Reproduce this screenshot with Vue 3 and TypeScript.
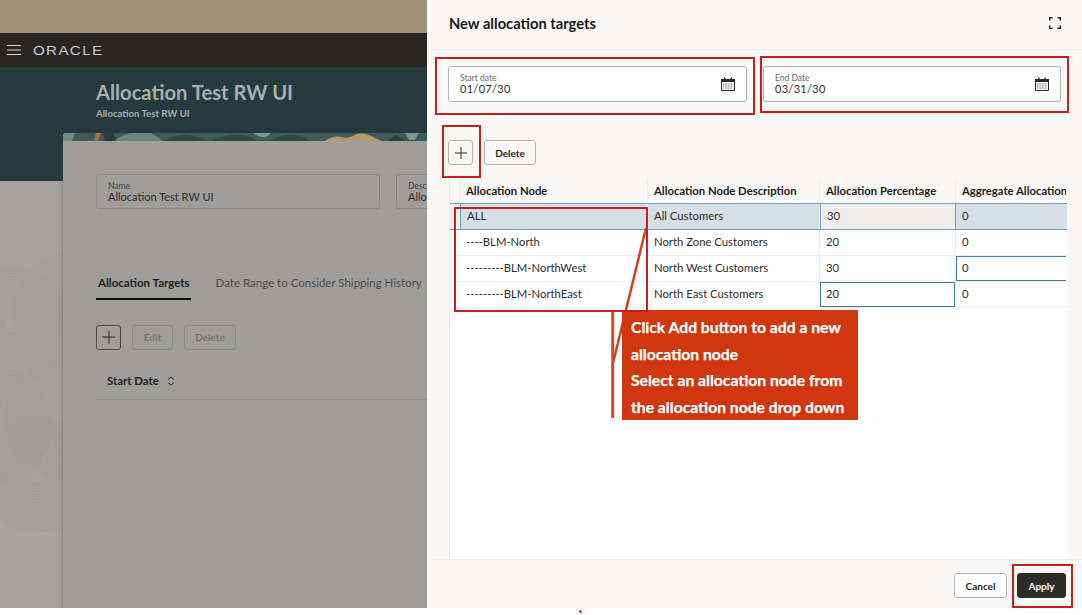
<script setup lang="ts">
interface Row { node: string; desc: string; pct: string; agg: string; cls: string }
const rows: Row[] = [
  { node: 'ALL', desc: 'All Customers', pct: '30', agg: '0', cls: 'sel' },
  { node: '----BLM-North', desc: 'North Zone Customers', pct: '20', agg: '0', cls: '' },
  { node: '---------BLM-NorthWest', desc: 'North West Customers', pct: '30', agg: '0', cls: 'agg-focus' },
  { node: '---------BLM-NorthEast', desc: 'North East Customers', pct: '20', agg: '0', cls: 'pct-focus' },
]
const arcs: number[] = Array.from({ length: 20 }, (_, i) => 8 + i * 2.6)
const clusters = [
  { x: 12, y: 75 }, { x: 62, y: 170 }, { x: -6, y: 175 }, { x: 38, y: 225 }, { x: 70, y: 60 },
]
</script>

<template>
  <div class="root">
    <div class="shot">
      <div class="page">
        <div class="tan"></div>
        <div class="nav">
          <svg class="burger" width="14" height="10" viewBox="0 0 14 10"><path d="M0 .5h14M0 5h14M0 9.500h14" stroke="#d8d6d3" stroke-width="1"/></svg>
          <span class="logo">ORACLE</span>
        </div>
        <div class="hero">
          <div class="hero-title">Allocation Test RW UI</div>
          <div class="hero-sub">Allocation Test RW UI</div>
        </div>
        <div class="rest">
          <svg class="pattern" width="63" height="280" viewBox="0 0 63 280" fill="none" stroke="#8b8885" stroke-width=".7" opacity=".3">
            <g v-for="c in clusters" :key="c.x + '-' + c.y">
              <circle v-for="r in arcs" :key="r" :cx="c.x" :cy="c.y" :r="r"/>
            </g>
          </svg>
        </div>
        <div class="card">
          <div class="card-band">
            <svg width="364" height="8" viewBox="0 0 364 8">
              <path d="M0 0h12l-3 8H0z" fill="#76898a"/>
              <path d="M33 0h5l-3 8h-4z" fill="#a8703a"/>
              <path d="M40 0h10l4 8H42z" fill="#283b3d"/>
              <path d="M52 8q8-8 20-8h16l12 8z" fill="#6d8483"/>
              <path d="M100 8q12-7 24-6t20 6zM148 8q14-7 28-6t18 6zM206 8q12-7 24-6t16 6z" fill="#2f4648"/>
              <path d="M190 0h18q-4 5-9 4t-9-4z" fill="#7d9596"/>
              <path d="M262 8q8-6 16-4t14-2 16 1 12 5z" fill="#b69a6c"/>
              <path d="M325 8l8-6 9 6z" fill="#273a3c"/>
              <path d="M342 0h14l-4 7h-6z" fill="#7d9596"/>
            </svg>
          </div>
          <div class="card-body">
            <div class="fields">
              <div class="bg-field name">
                <span class="bg-label">Name</span>
                <span class="bg-value">Allocation Test RW UI</span>
              </div>
              <div class="bg-field desc">
                <span class="bg-label">Desc</span>
                <span class="bg-value">Allo</span>
              </div>
            </div>
            <div class="tabs">
              <span class="tab active">Allocation Targets</span>
              <span class="tab">Date Range to Consider Shipping History</span>
            </div>
            <div class="bg-actions">
              <button class="bg-btn plus">
                <svg width="16" height="16" viewBox="0 0 16 16"><path d="M8 1.500v13M1.500 8h13" stroke="#2b2826" stroke-width="1"/></svg>
              </button>
              <button class="bg-btn off edit">Edit</button>
              <button class="bg-btn off del">Delete</button>
            </div>
            <div class="bg-th">
              <span>Start Date</span>
              <svg width="8" height="10" viewBox="0 0 8 10" fill="none" stroke="#2f2d2b" stroke-width="1"><path d="M1 3.500 4 1l3 2.500M1 6.500 4 9l3-2.500"/></svg>
            </div>
          </div>
        </div>
      </div>

      <aside class="drawer">
        <header class="d-head">
          <h2>New allocation targets</h2>
          <svg width="12" height="12" viewBox="0 0 12 12" fill="none" stroke="#2b2826" stroke-width="1.500"><path d="M.75 3.500V.75H3.500M8.500.75h2.750V3.500M11.250 8.500v2.750H8.500M3.500 11.250H.75V8.500"/></svg>
        </header>
        <div class="dates">
          <div class="date">
            <div class="date-txt"><span class="date-label">Start date</span><span class="date-val">01/07/30</span></div>
            <svg class="cal" width="14" height="14" viewBox="0 0 14 14"><path d="M.5 2.500h13v11H.5z" fill="none" stroke="#2b2826"/><path d="M0 2h14v3H0z" fill="#2b2826"/><path d="M3 .5h1.500v2H3zM9.500 .5H11v2H9.500z" fill="#2b2826"/><path d="M2 7h10M2 9h10M2 11h10" stroke="#6b6967" stroke-width="1" stroke-dasharray="1 .6"/></svg>
          </div>
          <div class="date end">
            <div class="date-txt"><span class="date-label">End Date</span><span class="date-val">03/31/30</span></div>
            <svg class="cal" width="14" height="14" viewBox="0 0 14 14"><path d="M.5 2.500h13v11H.5z" fill="none" stroke="#2b2826"/><path d="M0 2h14v3H0z" fill="#2b2826"/><path d="M3 .5h1.500v2H3zM9.500 .5H11v2H9.500z" fill="#2b2826"/><path d="M2 7h10M2 9h10M2 11h10" stroke="#6b6967" stroke-width="1" stroke-dasharray="1 .6"/></svg>
          </div>
        </div>
        <div class="toolbar">
          <button class="btn icon">
            <svg width="14" height="14" viewBox="0 0 14 14"><path d="M7 1v12M1 7h12" stroke="#2b2826" stroke-width="1"/></svg>
          </button>
          <button class="btn del-btn">Delete</button>
        </div>
        <div class="table-wrap">
          <div class="tr th">
            <div class="c gut"></div>
            <div class="c c1">Allocation Node</div>
            <div class="c c2">Allocation Node Description</div>
            <div class="c c3">Allocation Percentage</div>
            <div class="c c4">Aggregate Allocation</div>
          </div>
          <div v-for="r in rows" :key="r.node" class="tr" :class="r.cls">
            <div class="c gut"></div>
            <div class="c c1">{{ r.node }}</div>
            <div class="c c2">{{ r.desc }}</div>
            <div class="c c3">{{ r.pct }}</div>
            <div class="c c4">{{ r.agg }}</div>
          </div>
        </div>
        <footer class="d-foot">
          <button class="btn cancel">Cancel</button>
          <button class="btn apply">Apply</button>
        </footer>
      </aside>

      <svg class="leader" width="60" height="200" viewBox="0 0 60 200" fill="none">
        <path d="M46 6 13 141" stroke="#d2411c" stroke-width="2.500"/>
        <path d="M12.700 90V196" stroke="#d4492a" stroke-width="3"/>
      </svg>
      <div class="callout">
        <p>Click Add button to add a new</p>
        <p>allocation node</p>
        <p>Select an allocation node from</p>
        <p>the allocation node drop down</p>
      </div>
      <div class="box b-start"></div>
      <div class="box b-end"></div>
      <div class="box b-add"></div>
      <div class="box b-nodes"></div>
      <div class="box b-apply"></div>
    </div>
    <i class="dot"></i>
  </div>
</template>

<style>
html, body { margin: 0; background: #fff; }
</style>

<style scoped>
.root { position: relative; width: 1082px; height: 615px; overflow: hidden; background: #fff; font-family: Lato, "Noto Sans", "Liberation Sans", sans-serif; }
.shot { position: relative; display: flex; width: 1082px; height: 608px; overflow: hidden; }
.page { position: relative; width: 427px; flex: none; display: flex; flex-direction: column; background: #a09e9b; }
.tan { height: 33px; background: #a08e78; }
.nav { height: 34px; background: #292522; display: flex; align-items: center; padding-left: 7px; gap: 12px; }
.logo { color: #cfcdca; font-family: "Liberation Sans", sans-serif; font-size: 13px; letter-spacing: 1.200px; transform: scaleX(1.160); transform-origin: left; }
.hero { height: 114px; background: #26393d; padding-left: 96px; box-sizing: border-box; }
.hero-title { color: #a9aeae; font-size: 20.200px; font-weight: 700; line-height: 27px; margin-top: 12px; }
.hero-sub { color: #a9aeae; font-size: 9.600px; font-weight: 700; line-height: 13px; margin-top: 1px; }
.rest { flex: 1; position: relative; background: #a5a3a1; }
.pattern { position: absolute; left: 0; top: 70px; }
.card { position: absolute; left: 63px; top: 133px; right: 0; bottom: 0; background: #9f9e9b; border-radius: 3px 0 0 0; box-shadow: -1px 0 3px rgba(60,60,60,.35); }
.card-band { height: 8px; background: #3f5a5a; overflow: hidden; border-radius: 3px 0 0 0; display: flex; }
.card-body { padding: 33px 0 0 33px; }
.fields { display: flex; gap: 16px; }
.bg-field { height: 35px; box-sizing: border-box; border: 1px solid #8d8c8a; border-radius: 3px; padding: 6px 11px 0; display: flex; flex-direction: column; flex: none; }
.name { width: 284px; }
.desc { flex: 1; padding-right: 0; overflow: hidden; border-right: 0; border-radius: 3px 0 0 3px; }
.bg-label { font-size: 8.500px; line-height: 10px; color: #45433f; }
.bg-value { font-size: 11px; line-height: 12px; color: #2f2d2b; white-space: nowrap; }
.tabs { display: flex; margin-top: 64px; height: 27px; gap: 25px; }
.tab { font-size: 11.500px; color: #4d4b49; line-height: 20px; white-space: nowrap; }
.tab.active { color: #201e1c; font-weight: 700; padding: 0 1px 0 2px; border-bottom: 2px solid #111; height: 25px; }
.bg-actions { display: flex; gap: 11px; margin-top: 25px; }
.bg-btn { height: 25px; box-sizing: border-box; border: 1px solid #8c8b89; border-radius: 3px; background: transparent; font: 700 10px Lato, sans-serif; color: #777674; padding: 0 0 1px; display: flex; align-items: center; justify-content: center; }
.bg-btn.plus { width: 25px; border-color: #4c4a48; }
.edit { width: 41px; }
.del { width: 52px; }
.bg-th { display: flex; align-items: center; gap: 8px; height: 50px; padding: 12px 0 0 11px; border-bottom: 1px solid #93928f; font-size: 11.400px; font-weight: 700; color: #24221f; box-sizing: border-box; }

.drawer { flex: 1; background: #faf8f6; display: flex; flex-direction: column; margin-left: 1px; }
.d-head { height: 50px; flex: none; box-sizing: border-box; margin-left: 4px; border-bottom: 1px solid #efedeb; display: flex; align-items: center; justify-content: space-between; padding: 0 21px 4px 17px; }
.d-head h2 { margin: 0; font-size: 14.700px; font-weight: 700; color: #1c1a18; }
.dates { display: flex; gap: 16px; padding: 16px 0 0 20px; }
.date { width: 299px; height: 36px; box-sizing: border-box; border: 1px solid #b5b3b1; border-radius: 3px; background: #fff; display: flex; align-items: center; justify-content: space-between; padding: 0 11px; }
.date.end { width: 298px; }
.date-txt { display: flex; flex-direction: column; }
.date-label { font-size: 8.500px; line-height: 9px; color: #6a6866; margin-top: 1px; }
.date-val { font-size: 11px; line-height: 12px; letter-spacing: .3px; color: #2f2d2b; }
.toolbar { display: flex; gap: 11px; padding: 38px 0 0 20px; }
.btn { height: 25px; box-sizing: border-box; border: 1px solid #b5b3b1; border-radius: 3px; background: #faf8f6; font: 700 10px Lato, sans-serif; color: #2b2826; padding: 0; display: flex; align-items: center; justify-content: center; }
.icon { width: 25px; }
.del-btn { width: 52px; }
.table-wrap { flex: 1; margin: 14px 0 0 21px; width: 617px; min-height: 0; background: #fff; border-left: 1px solid #ecebe9; overflow: hidden; }
.tr { display: flex; height: 26px; box-sizing: border-box; border-bottom: 1px solid #efeeec; font-size: 11.300px; color: #2f2d2b; }
.th { height: 25px; background: #f8f7f5; font-weight: 700; color: #1f1d1b; }
.c { flex: none; box-sizing: border-box; padding: 0 6px; line-height: 24px; white-space: nowrap; overflow: hidden; border-right: 1px solid #efeeec; }
.gut { width: 10px; padding: 0; border-right: 0; }
.th .gut { background: #fbfaf9; border-right: 1px solid #efeeec; }
.c1 { width: 188px; }
.c2 { width: 172px; }
.c3 { width: 136px; }
.c4 { width: 110px; border-right: 0; }
.tr.sel { background: #d5dfe5; border-top: 1px solid #6fa3b8; border-bottom: 1px solid #6fa3b8; margin-top: -1px; height: 27px; }
.tr.sel .gut { background: #f0efed; }
.tr.sel .c1 { border-left: 1px solid #6fa3b8; }
.tr.sel .c3 { background: #eeedeb; border-left: 1px solid #6fa3b8; border-right: 1px solid #6fa3b8; }
.tr.agg-focus .c4 { box-shadow: inset 1px 1px 0 #3f7f9e, inset 0 -1px 0 #3f7f9e; }
.tr.pct-focus .c3 { box-shadow: inset 0 0 0 1px #3f7f9e; }
.d-foot { height: 49px; flex: none; box-sizing: border-box; margin-left: 4px; border-top: 1px solid #efedeb; display: flex; justify-content: flex-end; gap: 10px; padding: 13px 16px 0 0; }
.cancel { width: 53px; background: #fff; }
.apply { width: 49px; background: #2e2a27; border-color: #2e2a27; color: #fff; }

.box { position: absolute; box-sizing: border-box; border: 2px solid #c4201f; }
.b-start { left: 435px; top: 57px; width: 320px; height: 58px; }
.b-end { left: 760px; top: 56px; width: 309px; height: 57px; }
.b-add { left: 442px; top: 125px; width: 39px; height: 53px; }
.b-nodes { left: 454px; top: 207px; width: 194px; height: 105px; }
.b-apply { left: 1012px; top: 564px; width: 61px; height: 44px; }
.leader { position: absolute; left: 600px; top: 222px; overflow: visible; }
.callout { position: absolute; left: 622px; top: 310px; width: 236px; height: 110px; box-sizing: border-box; background: #d0360f; padding: 4px 0 0 9px; color: #fff; font-size: 15.700px; font-weight: 700; -webkit-text-stroke: .25px #fff; }
.callout p { margin: 0; line-height: 26.700px; white-space: nowrap; }
.dot { position: absolute; left: 579px; top: 610px; width: 3px; height: 3px; border-radius: 50%; background: #e0282a; }
</style>
